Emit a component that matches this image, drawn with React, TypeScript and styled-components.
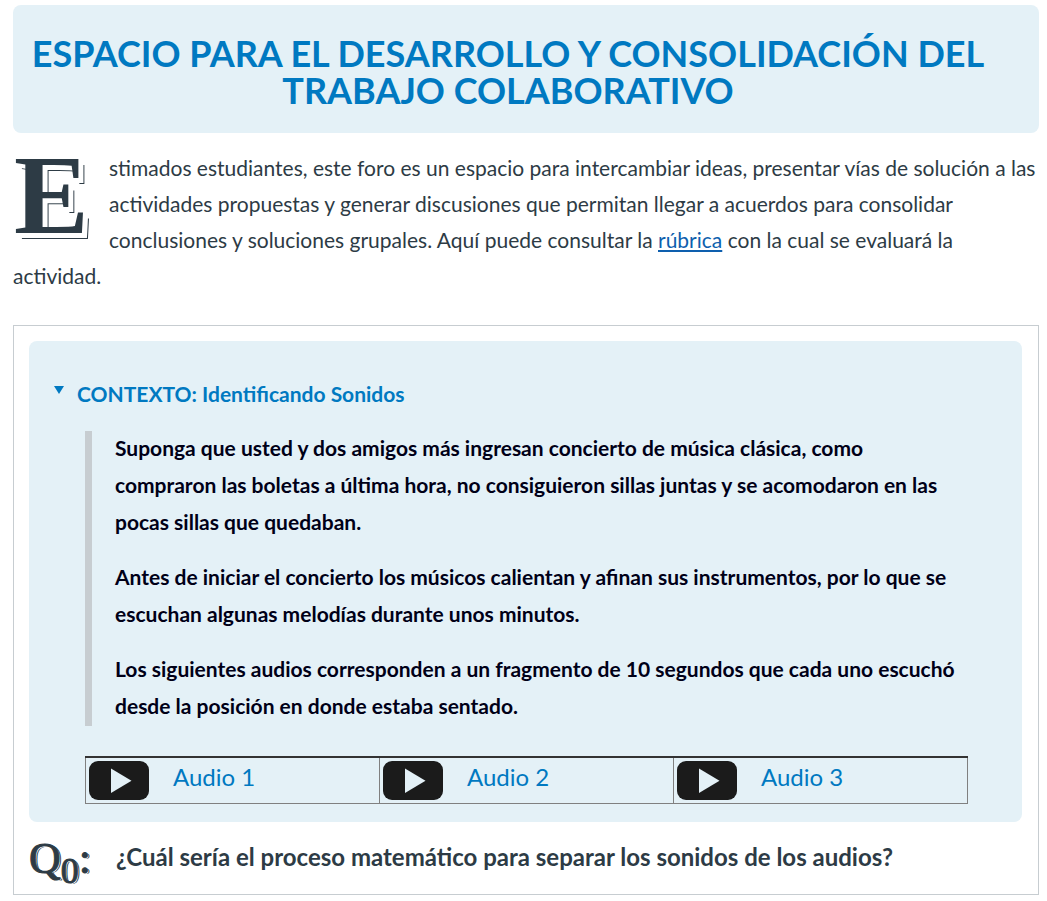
import React from "react";
import styled, { createGlobalStyle } from "styled-components";

const ink = "#2d3b45";
const blue = "#0079c1";
const pale = "#e4f1f7";

const GlobalStyle = createGlobalStyle`
  * { box-sizing: border-box; }
  body {
    margin: 0;
    background: #fff;
    color: ${ink};
    font-family: Lato, "Liberation Sans", sans-serif;
    font-size: 21px;
    line-height: 36px;
  }
`;

const Page = styled.main`
  padding: 5px 8px 6px 13px;
`;

const Banner = styled.header`
  background: ${pale};
  border-radius: 8px;
  padding: 30px 36px 24px 0;
`;

const Title = styled.h1`
  margin: 0;
  color: ${blue};
  font-size: 36px;
  font-weight: 700;
  line-height: 37px;
  text-align: center;
`;

const Intro = styled.p`
  margin: 17px 0 31px;
`;

const DropCap = styled.span`
  float: left;
  width: 96px;
  height: 100px;
  padding-left: 1px;
  font-family: "Liberation Serif", serif;
  font-size: 112px;
  font-weight: 700;
  line-height: 90px;
  text-shadow: 4px 4px 0 #fff, 5px 5px 0 #fff, 6px 6px 0 ${ink};
`;

const TextLink = styled.a`
  color: #0e5fae;
  text-decoration: underline;
  text-decoration-thickness: 2px;
  text-underline-offset: 2px;
`;

const Card = styled.section`
  border: 1px solid #c7cdd1;
  padding: 15px 16px 0 15px;
`;

const Context = styled.details`
  background: ${pale};
  border-radius: 8px;
  padding: 35px 54px 18px 56px;
`;

const ContextTitle = styled.summary`
  display: flex;
  align-items: center;
  gap: 13px;
  margin-left: -31px;
  color: ${blue};
  font-weight: 700;
  list-style: none;
  cursor: pointer;
  &::-webkit-details-marker { display: none; }
`;

const Marker = styled.svg`
  width: 10px;
  height: 18px;
  flex: none;
`;

const Quote = styled.blockquote`
  display: grid;
  gap: 18px;
  margin: 19px 0 30px;
  padding-left: 23px;
  border-left: 7px solid #c7cdd1;
  color: #000017;
  font-weight: 700;
  line-height: 37px;
`;

const QuoteText = styled.p`
  margin: -2px 0 2px;
`;

const AudioTable = styled.table`
  width: 100%;
  table-layout: fixed;
  border-collapse: collapse;
  border: 1px solid #808080;
  border-top: 2px solid #333;
`;

const AudioCell = styled.td`
  height: 46px;
  padding: 0 3px;
  border-left: 1px solid #808080;
`;

const AudioItem = styled.div`
  display: flex;
  align-items: center;
  gap: 24px;
`;

const PlayButton = styled.button`
  display: block;
  padding: 0;
  border: 0;
  background: none;
  cursor: pointer;
`;

const PlayIcon = styled.svg`
  display: block;
  width: 60px;
  height: 39px;
`;

const AudioLink = styled.a`
  padding-bottom: 6px;
  color: ${blue};
  font-size: 24px;
  text-decoration: none;
`;

const Question = styled.div`
  display: flex;
  height: 72px;
`;

const QuestionTag = styled.span`
  width: 87px;
  font-family: "Liberation Serif", serif;
  font-size: 44px;
  line-height: 74px;
  -webkit-text-stroke: 1px ${ink};
  text-shadow: 1px 1px 0 #fff, 2px 1px 0 ${ink};
`;

const Subscript = styled.sub`
  font-size: 36px;
  line-height: 0;
  vertical-align: -10px;
`;

const QuestionText = styled.h2`
  margin: 0;
  font-size: 24px;
  font-weight: 700;
  line-height: 70px;
`;

const paragraphs = [
  "Suponga que usted y dos amigos más ingresan concierto de música clásica, como compraron las boletas a última hora, no consiguieron sillas juntas y se acomodaron en las pocas sillas que quedaban.",
  "Antes de iniciar el concierto los músicos calientan y afinan sus instrumentos, por lo que se escuchan algunas melodías durante unos minutos.",
  "Los siguientes audios corresponden a un fragmento de 10 segundos que cada uno escuchó desde la posición en donde estaba sentado.",
];

const audios = ["Audio 1", "Audio 2", "Audio 3"];

export default function App() {
  return (
    <>
      <GlobalStyle />
      <Page>
        <Banner>
          <Title>ESPACIO PARA EL DESARROLLO Y CONSOLIDACIÓN DEL TRABAJO COLABORATIVO</Title>
        </Banner>
        <Intro>
          <DropCap>E</DropCap>
          stimados estudiantes, este foro es un espacio para intercambiar ideas, presentar vías de
          solución a las actividades propuestas y generar discusiones que permitan llegar a acuerdos
          para consolidar conclusiones y soluciones grupales. Aquí puede consultar la{" "}
          <TextLink href="#rubrica">rúbrica</TextLink> con la cual se evaluará la actividad.
        </Intro>
        <Card>
          <Context open>
            <ContextTitle>
              <Marker viewBox="0 0 10 18" aria-hidden="true">
                <path d="M0 1h10L5 9z" fill={blue} />
              </Marker>
              CONTEXTO: Identificando Sonidos
            </ContextTitle>
            <Quote>
              {paragraphs.map((text) => (
                <QuoteText key={text}>{text}</QuoteText>
              ))}
            </Quote>
            <AudioTable>
              <tbody>
                <tr>
                  {audios.map((name) => (
                    <AudioCell key={name}>
                      <AudioItem>
                        <PlayButton type="button" aria-label={`Reproducir ${name}`}>
                          <PlayIcon viewBox="0 0 60 39" aria-hidden="true">
                            <rect width="60" height="39" rx="9" fill="#1b1b1b" />
                            <path d="M22 7.5v24.5l20.500-12.200z" fill={pale} />
                          </PlayIcon>
                        </PlayButton>
                        <AudioLink href="#audio">{name}</AudioLink>
                      </AudioItem>
                    </AudioCell>
                  ))}
                </tr>
              </tbody>
            </AudioTable>
          </Context>
          <Question>
            <QuestionTag>
              Q<Subscript>0</Subscript>:
            </QuestionTag>
            <QuestionText>¿Cuál sería el proceso matemático para separar los sonidos de los audios?</QuestionText>
          </Question>
        </Card>
      </Page>
    </>
  );
}
